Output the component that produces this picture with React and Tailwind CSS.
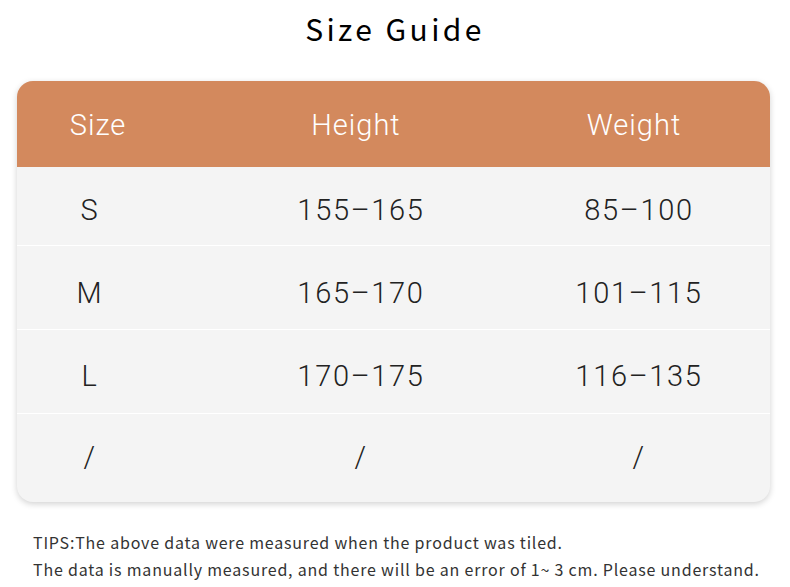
const rows = [
  { size: "S", height: "155–165", weight: "85–100", h: "h-[78px]", pt: "pt-[9px]" },
  { size: "M", height: "165–170", weight: "101–115", h: "h-[84px]", pt: "pt-[12px]" },
  { size: "L", height: "170–175", weight: "116–135", h: "h-[84px]", pt: "pt-[10px]" },
  { size: "/", height: "/", weight: "/", h: "h-[89px]", pt: "pt-0" },
];

export default function App() {
  return (
    <div className="w-[790px] h-[587px] bg-white overflow-hidden font-['Noto_Sans_CJK_SC','Noto_Sans',sans-serif]">
      {/* Title */}
      <h1 className="pt-[8px] h-[81px] text-center text-[30px] leading-[40px] tracking-[3.4px] text-black">
        Size Guide
      </h1>

      {/* Table card */}
      <div className="mx-[17px] w-[753px] rounded-[16px] overflow-hidden bg-[#f4f4f4] shadow-[0_2px_6px_rgba(0,0,0,0.18)]">
        <div className="h-[86px] pt-[4px] bg-[#d3895d] grid grid-cols-[162px_354px_202px] items-center text-white text-[29px] font-light tracking-[1px] font-['Roboto','Noto_Sans',sans-serif]">
          <div className="text-center">Size</div>
          <div className="text-center">Height</div>
          <div className="text-center">Weight</div>
        </div>
        {rows.map((r, i) => (
          <div
            key={i}
            className={`${r.h} ${r.pt} grid grid-cols-[146px_396px_160px] items-center text-[#222] text-[29px] font-light tracking-[1.7px] font-['Roboto','Noto_Sans',sans-serif] ${i > 0 ? "border-t border-white" : ""}`}
          >
            <div className="text-center">{r.size}</div>
            <div className="text-center">{r.height}</div>
            <div className="text-center">{r.weight}</div>
          </div>
        ))}
      </div>

      {/* Tips */}
      <div className="mt-[27px] pl-[33px] text-[16px] leading-[27px] text-[#333] tracking-[0.8px]">
        <p>TIPS:The above data were measured when the product was tiled.</p>
        <p>The data is manually measured, and there will be an error of 1~ 3 cm. Please understand.</p>
      </div>
    </div>
  );
}
